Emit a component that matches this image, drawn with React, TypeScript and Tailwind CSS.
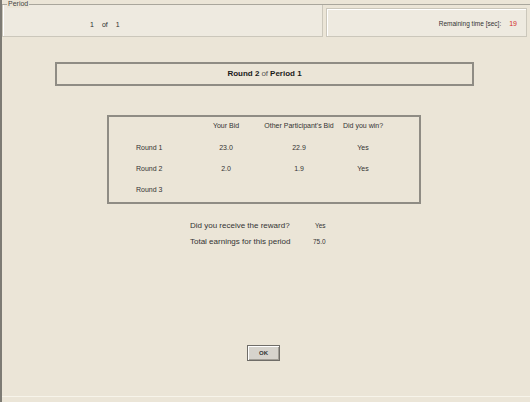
import React from "react";

const rows = [
  { label: "Round 1", mine: "23.0", other: "22.9", won: "Yes" },
  { label: "Round 2", mine: "2.0", other: "1.9", won: "Yes" },
  { label: "Round 3", mine: "", other: "", won: "" },
];

export default function App() {
  return (
    <div className="w-[530px] h-[402px] bg-[#ebe5d7] border-l-2 border-[#7d7b74] flex flex-col font-['Liberation_Sans',Arial,sans-serif] text-[#2a2a2a] overflow-hidden">
      {/* header strip */}
      <div className="h-[4px]" />
      <div className="border-t border-[#a9a69c] flex gap-[3px] pr-[3px] h-[33px]">
        <div className="relative w-[321px] border-l border-b border-r border-[#cbc7bb] bg-[#eeeae0] shadow-[inset_1px_0_0_#fff]">
          <span className="absolute left-[4px] top-[-5px] bg-[#ebe5d7] px-[1px] text-[7px] leading-[8px] text-[#444]">
            Period
          </span>
          <div className="flex pl-[87px] pt-[16px] text-[7px] leading-[8px] gap-[8px]">
            <span>1</span>
            <span>of</span>
            <span>1</span>
          </div>
        </div>
        <div className="flex-1 mt-[3px] border border-[#cbc7bb] bg-[#eeeae0] shadow-[inset_1px_1px_0_#fff] flex items-center justify-end pr-[9px] pt-[3px] text-[6.5px] leading-[8px]">
          <span className="text-[#333]">Remaining time [sec]:</span>
          <span className="ml-[8px] text-[7px] text-[#d42a2a]">19</span>
        </div>
      </div>

      {/* round title */}
      <div className="mt-[25px] ml-[53px] w-[419px] h-[24px] border-2 border-[#8f8c84] flex items-center justify-center text-[8px] text-[#1a1a1a]">
        <span className="font-bold">Round 2</span>
        <span className="mx-[2px] text-[#555]">of</span>
        <span className="font-bold">Period 1</span>
      </div>

      {/* bid history */}
      <div className="mt-[29px] ml-[105px] w-[314px] h-[89px] border-2 border-[#8f8c84] flex flex-col pt-[4px] text-[7px] leading-[8px] text-[#333]">
        <div className="flex h-[10px] items-center">
          <div className="w-[93px]" />
          <div className="w-[48px] flex justify-center whitespace-nowrap">Your Bid</div>
          <div className="w-[98px] flex justify-center whitespace-nowrap">Other Participant's Bid</div>
          <div className="w-[30px] flex justify-center whitespace-nowrap">Did you win?</div>
        </div>
        {rows.map((r) => (
          <div key={r.label} className="flex h-[8px] items-center mt-[13px]">
            <div className="w-[93px] pl-[27px]">{r.label}</div>
            <div className="w-[48px] flex justify-center">{r.mine}</div>
            <div className="w-[98px] flex justify-center">{r.other}</div>
            <div className="w-[30px] flex justify-center">{r.won}</div>
          </div>
        ))}
      </div>

      {/* period summary */}
      <div className="mt-[17px] ml-[188px] flex flex-col gap-[6px] text-[#333]">
        <div className="flex items-center h-[10px]">
          <span className="w-[125px] text-[8px]">Did you receive the reward?</span>
          <span className="text-[6.5px]">Yes</span>
        </div>
        <div className="flex items-center h-[10px]">
          <span className="w-[123px] text-[8px]">Total earnings for this period</span>
          <span className="text-[6.5px]">75.0</span>
        </div>
      </div>

      {/* confirm */}
      <div className="mt-[98px] ml-[245px]">
        <button className="w-[33px] h-[16px] bg-[#d6d3cc] border border-[#6f6d68] shadow-[inset_1px_1px_0_#fff,inset_-1px_-1px_0_#a19e96] flex items-center justify-center text-[6px] font-bold text-[#333]">
          OK
        </button>
      </div>

      <div className="flex-1" />
      <div className="h-[1px] bg-[#f7f4ea] mb-[5px]" />
    </div>
  );
}
